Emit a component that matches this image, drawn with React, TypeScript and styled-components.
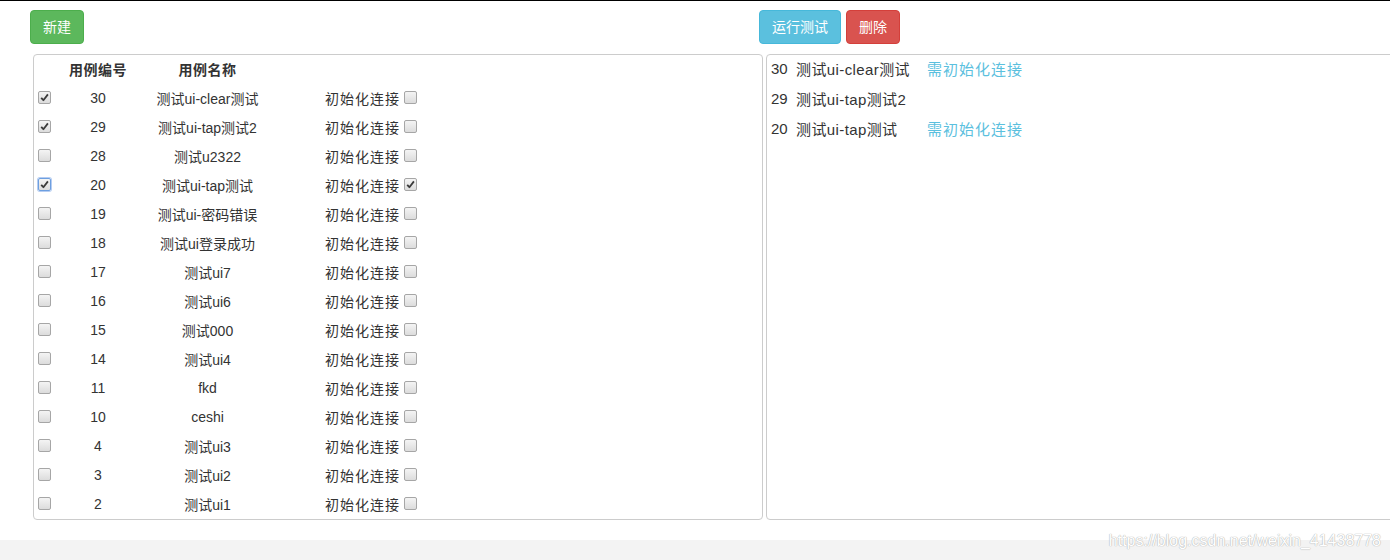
import React from 'react';
import styled, { createGlobalStyle } from 'styled-components';

type Case = {
  id: number;
  name: string;
  selected: boolean;
  init: boolean;
  focused?: boolean;
};

const cases: Case[] = [
  { id: 30, name: '测试ui-clear测试', selected: true, init: false },
  { id: 29, name: '测试ui-tap测试2', selected: true, init: false },
  { id: 28, name: '测试u2322', selected: false, init: false },
  { id: 20, name: '测试ui-tap测试', selected: true, init: true, focused: true },
  { id: 19, name: '测试ui-密码错误', selected: false, init: false },
  { id: 18, name: '测试ui登录成功', selected: false, init: false },
  { id: 17, name: '测试ui7', selected: false, init: false },
  { id: 16, name: '测试ui6', selected: false, init: false },
  { id: 15, name: '测试000', selected: false, init: false },
  { id: 14, name: '测试ui4', selected: false, init: false },
  { id: 11, name: 'fkd', selected: false, init: false },
  { id: 10, name: 'ceshi', selected: false, init: false },
  { id: 4, name: '测试ui3', selected: false, init: false },
  { id: 3, name: '测试ui2', selected: false, init: false },
  { id: 2, name: '测试ui1', selected: false, init: false },
];

const GlobalStyle = createGlobalStyle`
  html, body {
    margin: 0;
    padding: 0;
    background: #ffffff;
  }
  body {
    font-family: "Liberation Sans", Arial, "Noto Sans CJK SC", sans-serif;
    font-size: 14px;
    color: #333333;
    overflow: hidden;
  }
`;

const Page = styled.div`
  position: relative;
  width: 1390px;
  height: 560px;
  overflow: hidden;
  background: #f3f3f3;
`;

const Main = styled.div`
  height: 539px;
  background: #ffffff;
  border-top: 1px solid #000000;
  overflow: hidden;
`;

const Toolbar = styled.div`
  display: grid;
  grid-template-columns: 729px 1fr;
  padding: 9px 0 0 30px;
`;

const ButtonGroup = styled.div`
  display: flex;
  gap: 5px;
`;

const Button = styled.button<{ $bg: string; $border: string }>`
  height: 34px;
  padding: 0 12px;
  border: 1px solid ${({ $border }) => $border};
  border-radius: 4px;
  background: ${({ $bg }) => $bg};
  color: #ffffff;
  font-family: "Liberation Sans", Arial, "Noto Sans CJK SC", sans-serif;
  font-size: 14px;
  line-height: 20px;
  cursor: pointer;
`;

const Panels = styled.div`
  display: grid;
  grid-template-columns: 730px 640px;
  gap: 3px;
  padding: 10px 0 0 33px;
`;

const Panel = styled.div`
  height: 466px;
  box-sizing: border-box;
  border: 1px solid #cccccc;
  border-radius: 4px;
  overflow: hidden;
`;

const Row = styled.div<{ $head?: boolean }>`
  display: grid;
  grid-template-columns: 29px 70px 149px auto;
  height: ${({ $head }) => ($head ? '28px' : '29px')};
  align-items: center;
`;

const HeadCell = styled.div`
  font-weight: bold;
  text-align: center;
  letter-spacing: 0.5px;
`;

const Cell = styled.div<{ $align?: string }>`
  display: flex;
  align-items: center;
  justify-content: ${({ $align }) => $align || 'center'};
  white-space: nowrap;
`;

const CheckCell = styled(Cell)`
  padding-left: 4px;
`;

const InitCell = styled(Cell)`
  padding-left: 43px;
  gap: 4px;
`;

const InitLabel = styled.span`
  letter-spacing: 1px;
`;

const Box = styled.span<{ $focused?: boolean }>`
  display: inline-flex;
  align-items: center;
  justify-content: center;
  width: 13px;
  height: 13px;
  box-sizing: border-box;
  border: 1px solid ${({ $focused }) => ($focused ? '#6d9fe0' : '#a6a6a6')};
  box-shadow: ${({ $focused }) => ($focused ? '0 0 0 1px #b6cdf2' : 'none')};
  border-radius: 2px;
  background: linear-gradient(#f4f4f4, #dcdcdc);
`;

const Checkbox: React.FC<{ checked: boolean; focused?: boolean }> = ({ checked, focused }) => (
  <Box $focused={focused}>
    {checked && (
      <svg width="9" height="9" viewBox="0 0 9 9">
        <path d="M1.2 4.8 L3.4 7.2 L7.9 1.4" fill="none" stroke="#3a3a3a" strokeWidth="1.8" strokeLinejoin="round" />
      </svg>
    )}
  </Box>
);

const QueueList = styled.div`
  margin-top: -2px;
  padding-left: 4px;
`;

const QueueItem = styled.div`
  display: flex;
  align-items: center;
  height: 30px;
  white-space: nowrap;
  font-size: 15px;
`;

const QueueId = styled.span`
  width: 25px;
`;

const QueueName = styled.span`
  width: 131px;
  letter-spacing: 0.4px;
`;

const InitTag = styled.span`
  color: #5bc0de;
  letter-spacing: 1px;
`;

const Watermark = styled.div`
  position: absolute;
  right: 9px;
  bottom: 10px;
  font-family: "Liberation Sans", Arial, sans-serif;
  font-size: 16px;
  color: #ffffff;
  text-shadow: 0 0 1px #b0b0b0, 0 0 1px #b0b0b0;
`;

export default function App() {
  const queue = cases.filter((c) => c.selected);
  return (
    <Page>
      <GlobalStyle />
      <Main>
        <Toolbar>
          <ButtonGroup>
            <Button $bg="#5cb85c" $border="#4cae4c">新建</Button>
          </ButtonGroup>
          <ButtonGroup>
            <Button $bg="#5bc0de" $border="#46b8da">运行测试</Button>
            <Button $bg="#d9534f" $border="#d43f3a">删除</Button>
          </ButtonGroup>
        </Toolbar>
        <Panels>
          <Panel>
            <Row $head>
              <span />
              <HeadCell>用例编号</HeadCell>
              <HeadCell>用例名称</HeadCell>
              <span />
            </Row>
            {cases.map((c) => (
              <Row key={c.id}>
                <CheckCell $align="flex-start">
                  <Checkbox checked={c.selected} focused={c.focused} />
                </CheckCell>
                <Cell>{c.id}</Cell>
                <Cell>{c.name}</Cell>
                <InitCell $align="flex-start">
                  <InitLabel>初始化连接</InitLabel>
                  <Checkbox checked={c.init} />
                </InitCell>
              </Row>
            ))}
          </Panel>
          <Panel>
            <QueueList>
              {queue.map((c) => (
                <QueueItem key={c.id}>
                  <QueueId>{c.id}</QueueId>
                  <QueueName>{c.name}</QueueName>
                  {c.id !== 29 && <InitTag>需初始化连接</InitTag>}
                </QueueItem>
              ))}
            </QueueList>
          </Panel>
        </Panels>
      </Main>
      <Watermark>https://blog.csdn.net/weixin_41438778</Watermark>
    </Page>
  );
}
